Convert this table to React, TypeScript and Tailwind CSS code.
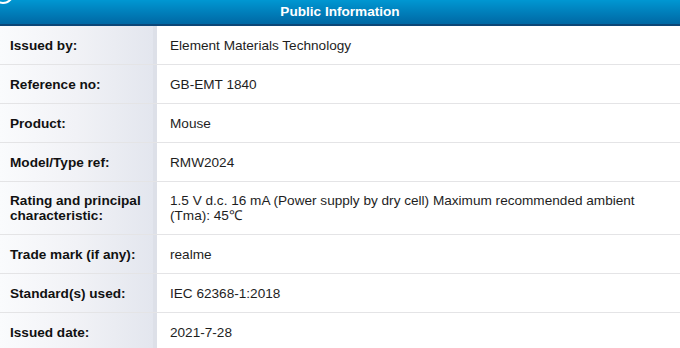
const rows: { label: string; value: string }[] = [
  { label: "Issued by:", value: "Element Materials Technology" },
  { label: "Reference no:", value: "GB-EMT 1840" },
  { label: "Product:", value: "Mouse" },
  { label: "Model/Type ref:", value: "RMW2024" },
  {
    label: "Rating and principal characteristic:",
    value: "1.5 V d.c. 16 mA (Power supply by dry cell) Maximum recommended ambient (Tma): 45℃",
  },
  { label: "Trade mark (if any):", value: "realme" },
  { label: "Standard(s) used:", value: "IEC 62368-1:2018" },
  { label: "Issued date:", value: "2021-7-28" },
];

export default function App() {
  return (
    <div className="w-[680px] h-[348px] overflow-hidden bg-white font-['Liberation_Sans',Arial,sans-serif] text-[13.6px]">
      <header className="relative h-[26px] flex items-center justify-center bg-gradient-to-b from-[#0097d2] to-[#0068a4] border-b-2 border-[#0b4677]">
        <svg className="absolute left-0 top-0" width="20" height="10" viewBox="0 0 20 10">
          <circle cx="3" cy="-7" r="10" fill="none" stroke="white" strokeWidth="2" />
        </svg>
        <h1 className="font-bold text-white leading-none">Public Information</h1>
      </header>

      <div className="flex flex-col">
        {rows.map((row) => (
          <div key={row.label} className="flex border-b border-[#e4e4e6]">
            <div className="w-[157px] shrink-0 flex items-center pl-[10px] pr-2 py-[11px] bg-gradient-to-r from-[#fafbfd] via-[#f1f2f6] to-[#e3e6ee] border-r-[4px] border-[#dde0e8]">
              <span className="font-bold text-[#111] leading-[15px]">{row.label}</span>
            </div>
            <div className="flex-1 flex items-center pl-[13px] pr-6 py-[11px] min-h-[38px]">
              <span className="text-[#1e1e1e] leading-[15px]">{row.value}</span>
            </div>
          </div>
        ))}
      </div>
    </div>
  );
}
